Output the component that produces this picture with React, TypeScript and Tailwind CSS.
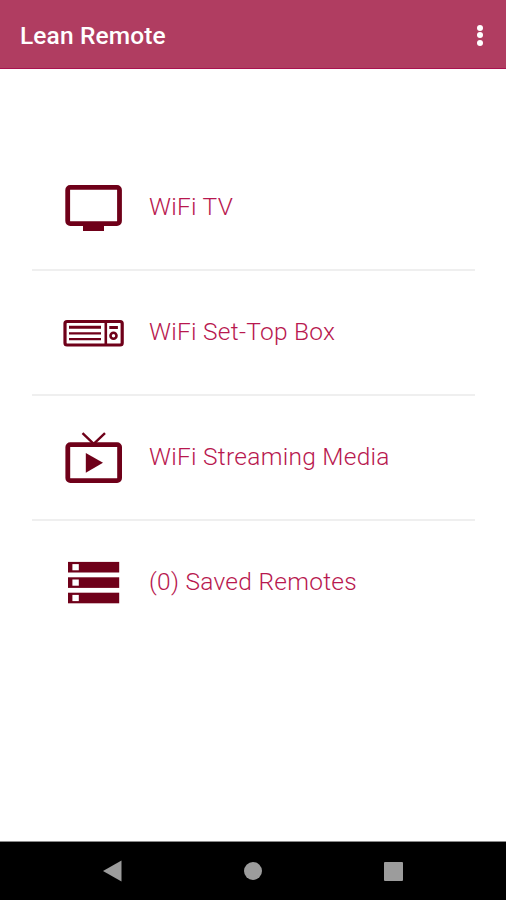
import type { ReactNode } from 'react';

const TvIcon = () => (
  <svg viewBox="0 0 64 63" className="h-[63px] w-16 shrink-0">
    <rect x="5.7" y="11.4" width="51.8" height="36.2" rx="2.5" fill="none" stroke="#6f0019" strokeWidth="4.8" />
    <path d="M21 49h21v6H21z" fill="#6f0019" />
  </svg>
);

const SetTopBoxIcon = () => (
  <svg viewBox="0 0 64 63" className="h-[63px] w-16 shrink-0" fill="none" stroke="#6f0019">
    <rect x="3" y="20.5" width="57.2" height="23.5" rx="2" strokeWidth="3.2" />
    <path d="M43.8 21v23" strokeWidth="2.6" />
    <path d="M7 26.3h32M47.3 26.5h8.6" strokeWidth="3" />
    <path d="M7 32.4h32M7 38.1h32" strokeWidth="2.4" />
    <circle cx="51.5" cy="34.8" r="3" strokeWidth="2.6" />
  </svg>
);

const StreamingIcon = () => (
  <svg viewBox="0 0 64 63" className="h-[63px] w-16 shrink-0">
    <rect x="5.8" y="18.6" width="51.8" height="36" rx="2.5" fill="none" stroke="#6f0019" strokeWidth="4.8" />
    <path d="M20.5 7.2L31.7 17.8L43 7.2" fill="none" stroke="#6f0019" strokeWidth="2.4" />
    <path d="M23.8 27v19.7L41 36.8z" fill="#6f0019" />
  </svg>
);

const SavedIcon = () => (
  <svg viewBox="0 0 64 63" className="h-[63px] w-16 shrink-0">
    {[10.9, 26.3, 41.7].map((y) => (
      <g key={y}>
        <rect x="6" y={y} width="51.2" height="10.6" fill="#6f0019" />
        <rect x="10.4" y={y + 2.2} width="6.4" height="6.2" fill="#fff" />
      </g>
    ))}
  </svg>
);

const items: { label: string; icon: ReactNode }[] = [
  { label: 'WiFi TV', icon: <TvIcon /> },
  { label: 'WiFi Set-Top Box', icon: <SetTopBoxIcon /> },
  { label: 'WiFi Streaming Media', icon: <StreamingIcon /> },
  { label: '(0) Saved Remotes', icon: <SavedIcon /> },
];

export default function App() {
  return (
    <div className="flex h-screen flex-col bg-white font-['Roboto',sans-serif]">
      <header className="flex h-[69px] shrink-0 items-center justify-between border-b border-[#a9124f] bg-[#b03d61] pr-[23px] pl-5">
        <h1 className="pt-1 text-[24.5px] font-medium tracking-[0.12px] text-white">Lean Remote</h1>
        <button className="flex flex-col gap-[1.5px] pt-0.5" aria-label="More options">
          <span className="size-1.5 rounded-full bg-white" />
          <span className="size-1.5 rounded-full bg-white" />
          <span className="size-1.5 rounded-full bg-white" />
        </button>
      </header>

      <main className="flex-1 px-8 pt-[77px]">
        <ul className="w-[443px] divide-y-2 divide-[#efefef]">
          {items.map((item) => (
            <li key={item.label} className="flex h-[125px] items-center pl-[30px] last:h-[123px]">
              {item.icon}
              <span className="ml-[23px] text-[24.5px] font-[350] tracking-[0.27px] whitespace-nowrap text-[#b8184f]">
                {item.label}
              </span>
            </li>
          ))}
        </ul>
      </main>

      <nav className="flex h-[59px] shrink-0 items-center justify-between border-t border-[#8a8a8a] bg-black pr-[103px] pl-[103px]">
        <svg viewBox="0 0 19 22" className="h-[22px] w-[19px]">
          <path d="M0 11L18.5 0.5v21z" fill="#9c9c9c" />
        </svg>
        <span className="size-[18px] rounded-full bg-[#9c9c9c]" />
        <span className="size-[19px] rounded-[1px] bg-[#9c9c9c]" />
      </nav>
    </div>
  );
}
